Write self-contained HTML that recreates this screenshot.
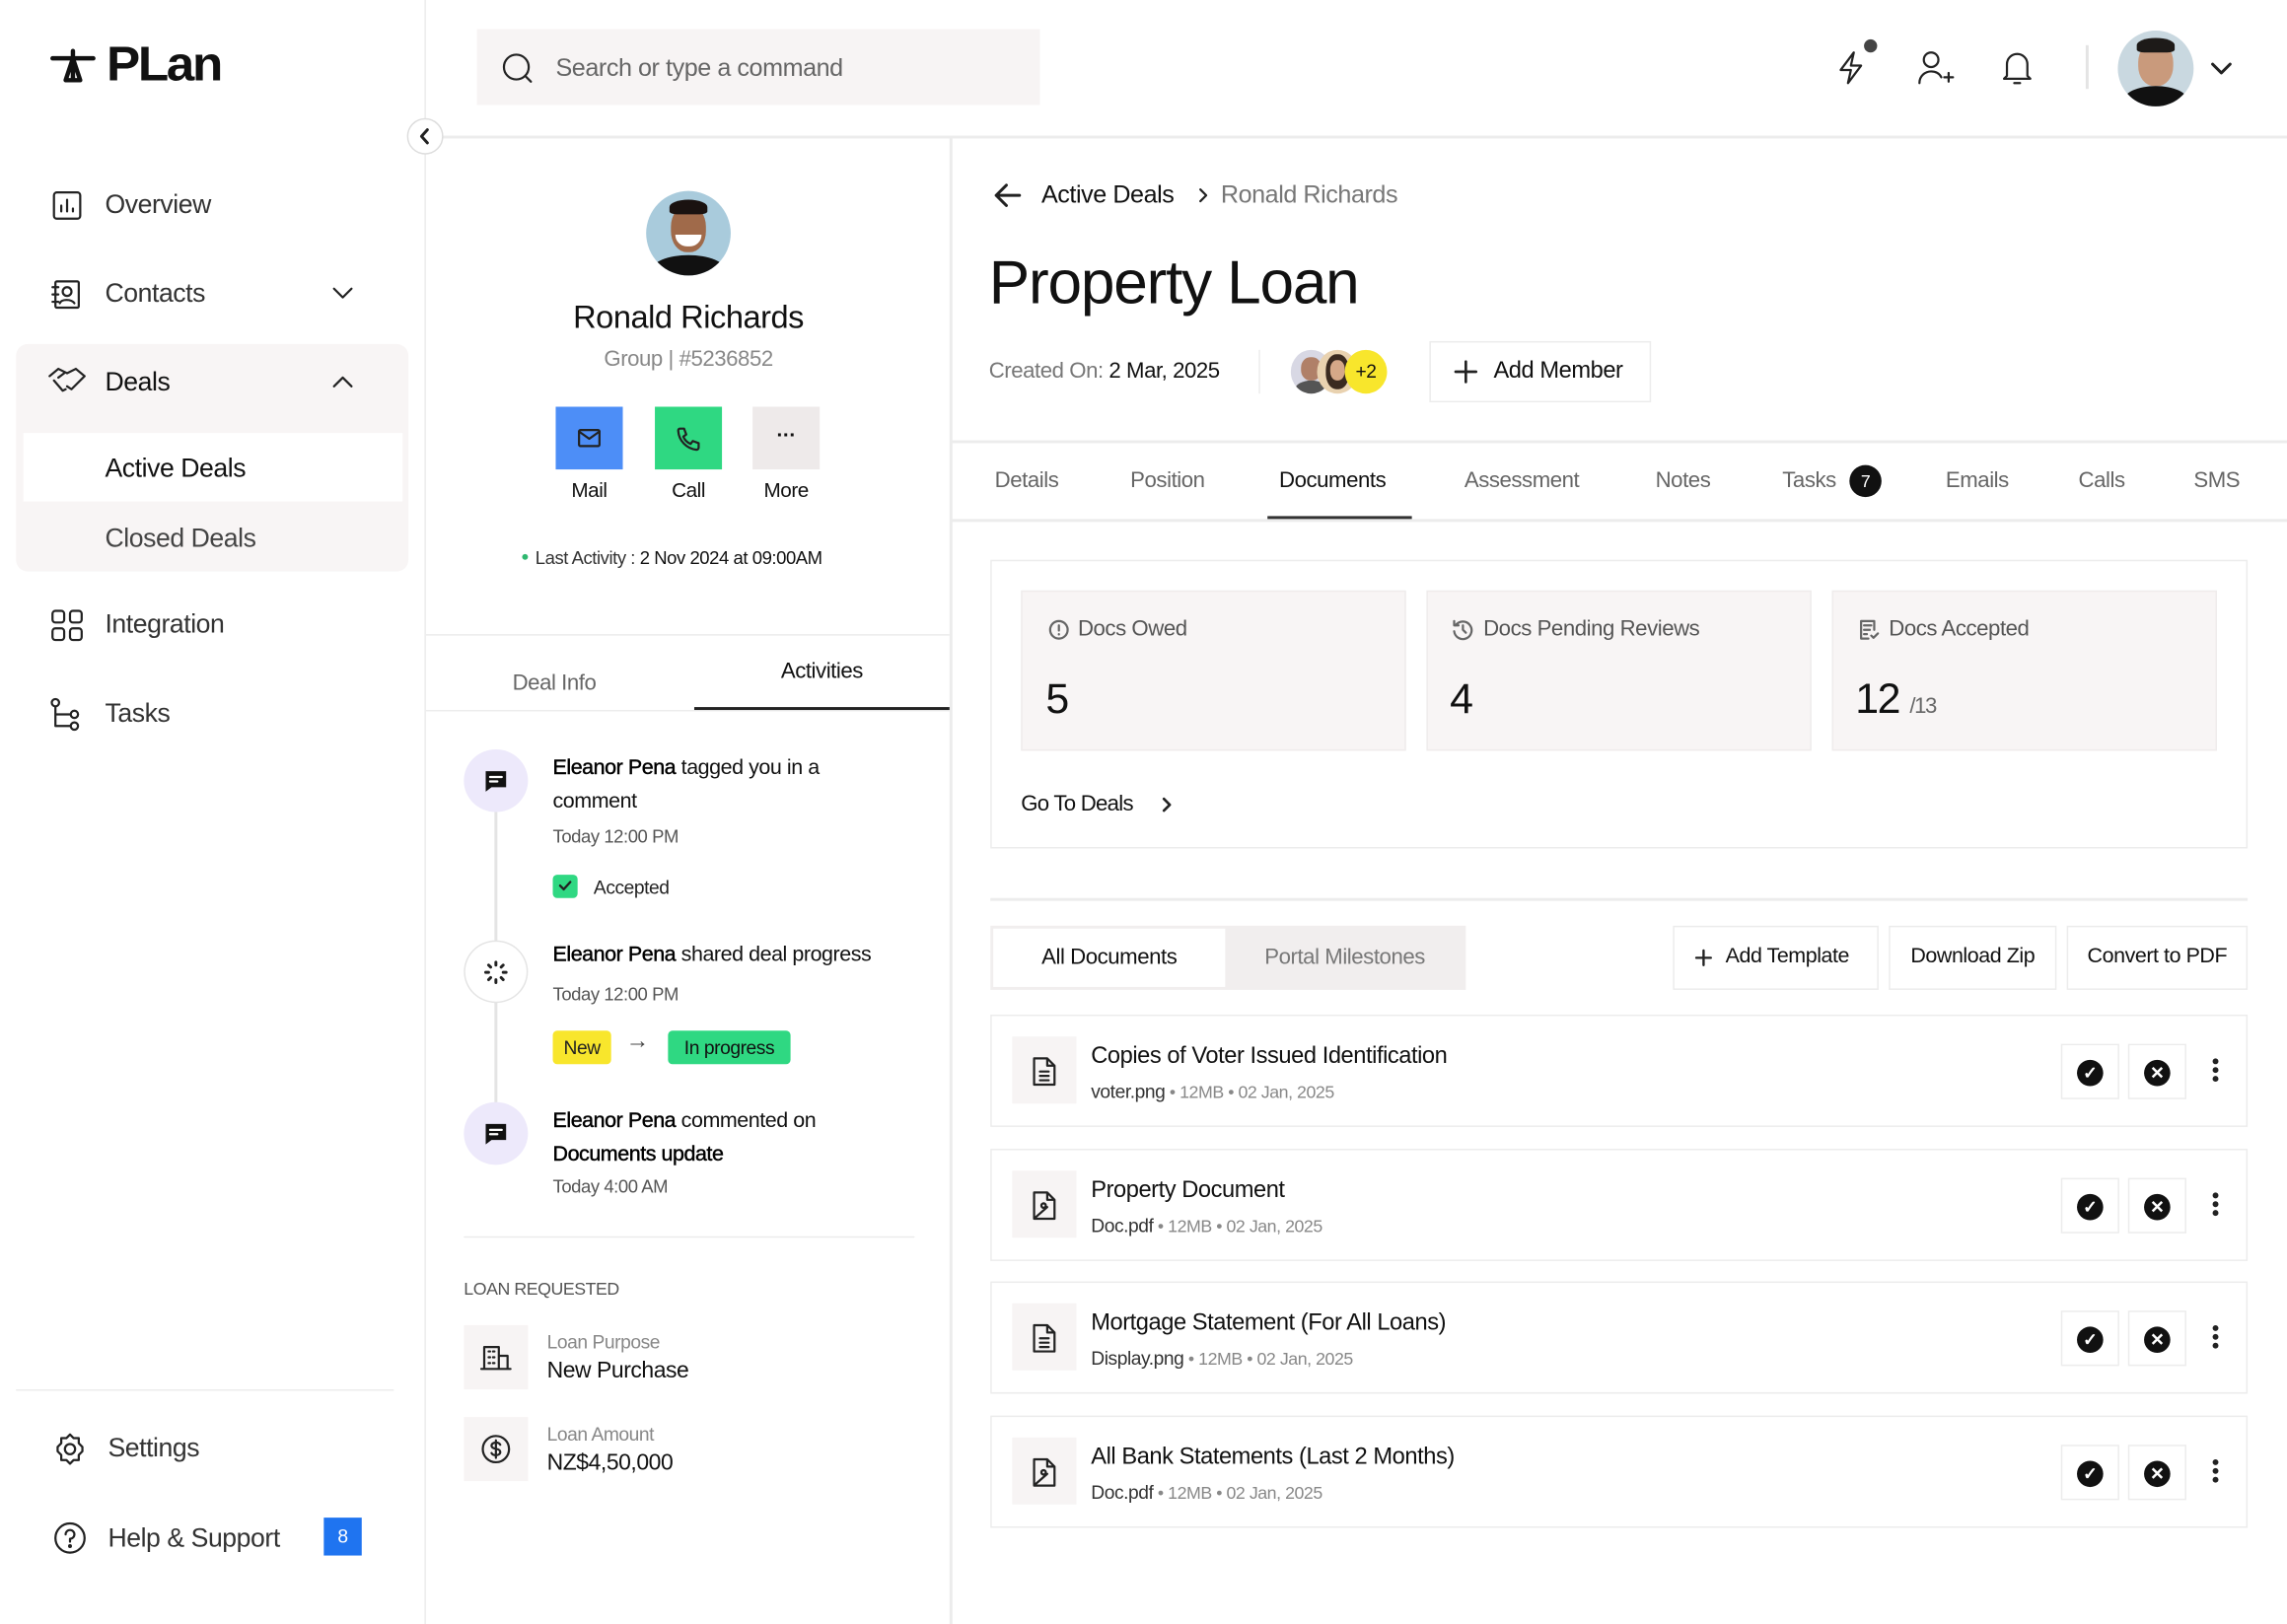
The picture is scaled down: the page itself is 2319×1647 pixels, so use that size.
<!DOCTYPE html>
<html><head><meta charset="utf-8">
<style>
*{box-sizing:border-box;margin:0;padding:0}
html,body{width:2319px;height:1647px;overflow:hidden;background:#fff}
#s{position:absolute;left:0;top:0;width:1568px;height:1114px;transform:scale(1.47895,1.4785);transform-origin:0 0;font-family:"Liberation Sans",sans-serif;color:#111;letter-spacing:-0.3px}
.a{position:absolute;white-space:nowrap}
.g{color:#666}
.b{border:1px solid #ececec}
svg{position:absolute;fill:none;stroke:#222;stroke-width:1.5;stroke-linecap:round;stroke-linejoin:round}
.nav{font-size:18px;color:#333}
.tab{font-size:15px;color:#666;top:321px}
.doc{position:absolute;left:679px;width:862px;height:77px;border:1.5px solid #ececec}
.doc .ib{position:absolute;left:14px;top:14px;width:44px;height:46px;background:#f7f4f4}
.doc .t{position:absolute;left:68px;top:19px;font-size:16px;color:#111}
.doc .m{position:absolute;left:68px;top:44px;font-size:12px;color:#888}
.doc .m span{color:#333;font-size:13px}
.doc .c1,.doc .c2{position:absolute;top:19px;width:40px;height:38px;border:1px solid #ececec}
.doc .c1{left:733px}.doc .c2{left:779px}
.dot{position:absolute;left:10px;top:10px;width:18px;height:18px;border-radius:50%;background:#111;color:#fff;font-size:12px;text-align:center;line-height:18px;font-weight:bold}
.vd{position:absolute;left:837px;top:29px;width:4px;height:4px;border-radius:50%;background:#222;box-shadow:0 6px 0 #222,0 12px 0 #222}
</style></head><body><div id="s">

<!-- Sidebar -->
<div class="a" style="left:291px;top:0;width:1px;height:1114px;background:#ececec"></div>
<svg style="left:34px;top:33px" width="32" height="24" viewBox="0 0 32 24"><path d="M2 7h28M16 2v20M16 7l-5 15h10z" stroke="#111" stroke-width="3"/></svg>
<div class="a" style="left:73px;top:25px;font-size:33px;font-weight:bold;letter-spacing:-1.5px;transform:scaleX(1.05);transform-origin:0 0">PLan</div>

<svg style="left:35px;top:130px" width="22" height="22" viewBox="0 0 22 22"><rect x="2" y="2" width="18" height="18" rx="2"/><path d="M7 15v-4M11 15V7M15 15v-2"/></svg>
<div class="a nav" style="left:72px;top:130px">Overview</div>
<svg style="left:34px;top:191px" width="22" height="22" viewBox="0 0 22 22"><rect x="4" y="2" width="16" height="18" rx="1"/><circle cx="12" cy="9" r="3"/><path d="M7 17c1-3 8-3 10 0M2 6h4M2 11h4M2 16h4"/></svg>
<div class="a nav" style="left:72px;top:191px">Contacts</div>
<svg style="left:227px;top:194px" width="16" height="14" viewBox="0 0 16 14"><path d="M2 4l6 6 6-6"/></svg>

<div class="a" style="left:11px;top:236px;width:269px;height:156px;background:#f8f5f5;border-radius:8px"></div>
<div class="a" style="left:16px;top:297px;width:260px;height:47px;background:#fff"></div>
<svg style="left:32px;top:250px" width="28" height="24" viewBox="0 0 28 24"><path d="M2 8l6-5 6 3 6-3 6 5-9 9-3-2M5 11l6 7 2-1M8 9l4-3"/></svg>
<div class="a nav" style="left:72px;top:252px;color:#111">Deals</div>
<svg style="left:227px;top:255px" width="16" height="14" viewBox="0 0 16 14"><path d="M2 10l6-6 6 6"/></svg>
<div class="a" style="left:72px;top:311px;font-size:18px;color:#111">Active Deals</div>
<div class="a nav" style="left:72px;top:359px;color:#444">Closed Deals</div>

<svg style="left:34px;top:417px" width="24" height="24" viewBox="0 0 24 24"><rect x="2" y="2" width="8" height="8" rx="2"/><rect x="14" y="2" width="8" height="8" rx="2"/><rect x="2" y="14" width="8" height="8" rx="2"/><rect x="14" y="14" width="8" height="8" rx="2"/></svg>
<div class="a nav" style="left:72px;top:418px">Integration</div>
<svg style="left:34px;top:478px" width="22" height="24" viewBox="0 0 22 24"><circle cx="4" cy="4" r="2.5"/><circle cx="17" cy="12" r="2.5"/><circle cx="17" cy="20" r="2.5"/><path d="M4 7v13h10M4 12h10"/></svg>
<div class="a nav" style="left:72px;top:479px">Tasks</div>

<div class="a" style="left:11px;top:953px;width:259px;height:1px;background:#ececec"></div>
<svg style="left:36px;top:982px" width="24" height="24" viewBox="0 0 24 24"><circle cx="12" cy="12" r="3.5"/><path d="M12 2l2.5 2.5h3.5v3.5L20.5 10.5v3L18 16v3.5h-3.5L12 22l-2.5-2.5H6V16L3.5 13.5v-3L6 8V4.5h3.5z"/></svg>
<div class="a nav" style="left:74px;top:983px">Settings</div>
<svg style="left:36px;top:1043px" width="24" height="24" viewBox="0 0 24 24"><circle cx="12" cy="12" r="10"/><path d="M9 9.5a3 3 0 1 1 3 3v2"/><circle cx="12" cy="17.5" r=".6" fill="#222"/></svg>
<div class="a nav" style="left:74px;top:1045px">Help &amp; Support</div>
<div class="a" style="left:222px;top:1041px;width:26px;height:26px;background:#1f74f0;color:#fff;font-size:13px;text-align:center;line-height:26px">8</div>

<!-- Topbar -->
<div class="a" style="left:292px;top:93px;width:1276px;height:1.5px;background:#ececec"></div>
<div class="a" style="left:327px;top:20px;width:386px;height:52px;background:#f7f4f4"></div>
<svg style="left:343px;top:35px" width="24" height="24" viewBox="0 0 24 24"><circle cx="11" cy="11" r="8.5"/><path d="M17 17l4 4"/></svg>
<div class="a" style="left:381px;top:37px;font-size:17px;color:#666">Search or type a command</div>
<div class="a" style="left:279px;top:81px;width:25px;height:25px;border-radius:50%;background:#fff;border:1px solid #ddd"></div>
<svg style="left:284px;top:86px" width="15" height="15" viewBox="0 0 15 15"><path d="M9 3L5 7.5 9 12" stroke-width="2"/></svg>

<svg style="left:1257px;top:32px" width="26" height="28" viewBox="0 0 26 28"><path d="M14 4L5 16h7l-2 9 9-12h-7z"/></svg>
<div class="a" style="left:1278px;top:27px;width:9px;height:9px;border-radius:50%;background:#444"></div>
<svg style="left:1313px;top:33px" width="28" height="28" viewBox="0 0 28 28"><circle cx="11" cy="8" r="5"/><path d="M3 24c0-5 4-8 8-8s6 2 7 4M20 20h6M23 17v6"/></svg>
<svg style="left:1370px;top:32px" width="26" height="28" viewBox="0 0 26 28"><path d="M6 20V12a7 7 0 0 1 14 0v8l2 2H4zM11 25h4"/></svg>
<div class="a" style="left:1430px;top:31px;width:1.5px;height:30px;background:#e4e4e4"></div>
<div class="a" style="left:1452px;top:21px;width:52px;height:52px;border-radius:50%;background:#c9d8e0;overflow:hidden">
 <div style="position:absolute;left:14px;top:8px;width:24px;height:30px;border-radius:45%;background:#c99a7c"></div>
 <div style="position:absolute;left:13px;top:5px;width:26px;height:10px;border-radius:50% 50% 20% 20%;background:#1d1a18"></div>
 <div style="position:absolute;left:4px;top:38px;width:44px;height:20px;border-radius:50% 50% 0 0;background:#111"></div>
</div>
<svg style="left:1515px;top:40px" width="16" height="14" viewBox="0 0 16 14"><path d="M2 4l6 6 6-6" stroke-width="2"/></svg>

<!-- Middle panel -->
<div class="a" style="left:651px;top:94px;width:1.5px;height:1020px;background:#ececec"></div>
<div class="a" style="left:443px;top:131px;width:58px;height:58px;border-radius:50%;background:#a9cbdc;overflow:hidden">
 <div style="position:absolute;left:17px;top:10px;width:24px;height:32px;border-radius:45%;background:#a06a4a"></div>
 <div style="position:absolute;left:16px;top:6px;width:26px;height:10px;border-radius:50% 50% 20% 20%;background:#1a1210"></div>
 <div style="position:absolute;left:20px;top:30px;width:18px;height:8px;border-radius:0 0 9px 9px;background:#fff"></div>
 <div style="position:absolute;left:4px;top:44px;width:50px;height:20px;border-radius:50% 50% 0 0;background:#111"></div>
</div>
<div class="a" style="left:292px;width:360px;top:205px;text-align:center;font-size:22px;color:#111">Ronald Richards</div>
<div class="a" style="left:292px;width:360px;top:238px;text-align:center;font-size:15px;color:#888">Group | #5236852</div>
<div class="a" style="left:381px;top:279px;width:46px;height:43px;background:#4d8ef7"></div>
<svg style="left:395px;top:293px" width="18" height="15" viewBox="0 0 18 15"><rect x="2" y="2" width="14" height="11" rx="1"/><path d="M2 3l7 5 7-5"/></svg>
<div class="a" style="left:449px;top:279px;width:46px;height:43px;background:#2fd882"></div>
<svg style="left:462px;top:291px" width="20" height="20" viewBox="0 0 20 20"><path d="M4 3h3l1.5 4-2 1.5a9 9 0 0 0 5 5l1.5-2 4 1.5v3a1.5 1.5 0 0 1-1.5 1.5A14 14 0 0 1 3 4.5 1.5 1.5 0 0 1 4 3z"/></svg>
<div class="a" style="left:516px;top:279px;width:46px;height:43px;background:#eeeaea;text-align:center;font-size:14px;line-height:38px;font-weight:bold">···</div>
<div class="a" style="left:381px;width:46px;top:328px;text-align:center;font-size:14px">Mail</div>
<div class="a" style="left:442px;width:60px;top:328px;text-align:center;font-size:14px">Call</div>
<div class="a" style="left:509px;width:60px;top:328px;text-align:center;font-size:14px">More</div>
<div class="a" style="left:358px;top:380px;width:4px;height:4px;border-radius:50%;background:#2fb870"></div>
<div class="a" style="left:367px;top:376px;font-size:12.5px;color:#333">Last Activity : <span style="color:#111">2 Nov 2024 at 09:00AM</span></div>

<div class="a" style="left:292px;top:435px;width:359px;height:1px;background:#ececec"></div>
<div class="a" style="left:292px;top:487px;width:359px;height:1px;background:#ececec"></div>
<div class="a" style="left:292px;width:176px;top:460px;text-align:center;font-size:15px;color:#666">Deal Info</div>
<div class="a" style="left:476px;width:175px;top:452px;text-align:center;font-size:15px;color:#111">Activities</div>
<div class="a" style="left:476px;top:485px;width:175px;height:2px;background:#222"></div>

<div class="a" style="left:339px;top:557px;width:1.5px;height:200px;background:#e4e4e4"></div>
<div class="a" style="left:318px;top:514px;width:44px;height:43px;border-radius:50%;background:#ede9fb"></div>
<svg style="left:331px;top:527px" width="18" height="18" viewBox="0 0 18 18"><path d="M2 2h14v11H6l-4 3z" fill="#111" stroke="none"/><path d="M5 6h8M5 9h5" stroke="#fff"/></svg>
<div class="a" style="left:379px;top:516px;font-size:14.5px;line-height:23px;white-space:normal;width:240px"><b style="font-weight:normal;color:#000;-webkit-text-stroke:.3px #000">Eleanor Pena</b> tagged you in a comment</div>
<div class="a" style="left:379px;top:567px;font-size:12.5px;color:#555">Today 12:00 PM</div>
<div class="a" style="left:379px;top:600px;width:17px;height:16px;border-radius:3px;background:#2fd882"></div>
<svg style="left:381px;top:601px" width="13" height="13" viewBox="0 0 13 13"><path d="M3 6.5l2.5 2.5 4.5-5" stroke-width="1.6"/></svg>
<div class="a" style="left:407px;top:601px;font-size:13px;color:#222">Accepted</div>

<div class="a" style="left:318px;top:645px;width:44px;height:43px;border-radius:50%;background:#fff;border:1px solid #e4e4e4"></div>
<svg style="left:330px;top:657px" width="20" height="20" viewBox="0 0 20 20"><path d="M10 3v2M10 15v2M3 10h2M15 10h2M5 5l1.4 1.4M13.6 13.6L15 15M5 15l1.4-1.4M13.6 6.4L15 5" stroke-width="2"/></svg>
<div class="a" style="left:379px;top:647px;font-size:14.5px"><b style="font-weight:normal;color:#000;-webkit-text-stroke:.3px #000">Eleanor Pena</b> shared deal progress</div>
<div class="a" style="left:379px;top:675px;font-size:12.5px;color:#555">Today 12:00 PM</div>
<div class="a" style="left:379px;top:707px;width:40px;height:23px;border-radius:3px;background:#f8e62c;font-size:13px;text-align:center;line-height:23px;color:#222">New</div>
<div class="a" style="left:429px;top:706px;font-size:16px;color:#444">→</div>
<div class="a" style="left:458px;top:707px;width:84px;height:23px;border-radius:3px;background:#2fd882;font-size:13px;text-align:center;line-height:23px;color:#111">In progress</div>

<div class="a" style="left:318px;top:756px;width:44px;height:43px;border-radius:50%;background:#ede9fb"></div>
<svg style="left:331px;top:769px" width="18" height="18" viewBox="0 0 18 18"><path d="M2 2h14v11H6l-4 3z" fill="#111" stroke="none"/><path d="M5 6h8M5 9h5" stroke="#fff"/></svg>
<div class="a" style="left:379px;top:758px;font-size:14.5px;line-height:23px"><b style="font-weight:normal;color:#000;-webkit-text-stroke:.3px #000">Eleanor Pena</b> commented on<br><b style="font-weight:normal;color:#000;-webkit-text-stroke:.3px #000">Documents update</b></div>
<div class="a" style="left:379px;top:807px;font-size:12.5px;color:#555">Today 4:00 AM</div>

<div class="a" style="left:318px;top:848px;width:309px;height:1px;background:#ececec"></div>
<div class="a" style="left:318px;top:877px;font-size:12px;color:#555">LOAN REQUESTED</div>
<div class="a" style="left:318px;top:909px;width:44px;height:44px;background:#f7f4f4"></div>
<svg style="left:329px;top:920px" width="22" height="22" viewBox="0 0 22 22"><path d="M3 19V4h10v15M13 10h6v9M1 19h20M6 7h1M9 7h1M6 11h1M9 11h1M6 15h1M9 15h1"/></svg>
<div class="a" style="left:375px;top:913px;font-size:13px;color:#888">Loan Purpose</div>
<div class="a" style="left:375px;top:932px;font-size:15.5px;color:#111">New Purchase</div>
<div class="a" style="left:318px;top:972px;width:44px;height:44px;background:#f7f4f4"></div>
<svg style="left:329px;top:983px" width="22" height="22" viewBox="0 0 22 22"><circle cx="11" cy="11" r="9"/><path d="M14 8c-.5-1-1.5-1.5-3-1.5s-3 .8-3 2.2 1.5 1.8 3 2.1 3 .8 3 2.2-1.5 2.2-3 2.2-2.5-.5-3-1.5M11 5v12"/></svg>
<div class="a" style="left:375px;top:976px;font-size:13px;color:#888">Loan Amount</div>
<div class="a" style="left:375px;top:995px;font-size:15.5px;color:#111">NZ$4,50,000</div>

<!-- Right panel -->
<svg style="left:680px;top:123px" width="22" height="22" viewBox="0 0 22 22"><path d="M19 11H3M10 4l-7 7 7 7" stroke-width="2"/></svg>
<div class="a" style="left:714px;top:124px;font-size:17px;color:#111">Active Deals</div>
<svg style="left:819px;top:127px" width="12" height="14" viewBox="0 0 12 14"><path d="M4 3l4 4-4 4"/></svg>
<div class="a" style="left:837px;top:124px;font-size:17px;color:#777">Ronald Richards</div>
<div class="a" style="left:678px;top:170px;font-size:42px;color:#111;letter-spacing:-0.8px">Property Loan</div>
<div class="a" style="left:678px;top:246px;font-size:15px;color:#777">Created On: <span style="color:#111">2 Mar, 2025</span></div>
<div class="a" style="left:863px;top:240px;width:1px;height:30px;background:#ececec"></div>
<div class="a" style="left:885px;top:240px;width:28px;height:30px;border-radius:50%;background:#d8d8e4;overflow:hidden"><div style="position:absolute;left:7px;top:5px;width:14px;height:16px;border-radius:45%;background:#b08068"></div><div style="position:absolute;left:3px;top:21px;width:22px;height:12px;border-radius:50%;background:#555"></div></div>
<div class="a" style="left:903px;top:240px;width:28px;height:30px;border-radius:50%;background:#e9d2b0;overflow:hidden"><div style="position:absolute;left:6px;top:3px;width:16px;height:24px;border-radius:45%;background:#3a2a20"></div><div style="position:absolute;left:9px;top:7px;width:10px;height:14px;border-radius:45%;background:#d5a888"></div></div>
<div class="a" style="left:922px;top:240px;width:29px;height:30px;border-radius:50%;background:#f8e62c;font-size:13px;text-align:center;line-height:30px;color:#111">+2</div>
<div class="a" style="left:980px;top:234px;width:152px;height:42px;border:1.5px solid #ececec"></div>
<svg style="left:996px;top:246px" width="18" height="18" viewBox="0 0 18 18"><path d="M9 2v14M2 9h14" stroke-width="1.8"/></svg>
<div class="a" style="left:1024px;top:246px;font-size:16px;color:#111">Add Member</div>

<div class="a" style="left:652px;top:302px;width:916px;height:1.5px;background:#ececec"></div>
<div class="a" style="left:652px;top:356px;width:916px;height:1.5px;background:#ececec"></div>
<div class="a tab" style="left:682px">Details</div>
<div class="a tab" style="left:775px">Position</div>
<div class="a tab" style="left:877px;color:#111">Documents</div>
<div class="a" style="left:869px;top:354px;width:99px;height:2px;background:#333"></div>
<div class="a tab" style="left:1004px">Assessment</div>
<div class="a tab" style="left:1135px">Notes</div>
<div class="a tab" style="left:1222px">Tasks</div>
<div class="a" style="left:1268px;top:319px;width:22px;height:22px;border-radius:50%;background:#111;color:#fff;font-size:12px;text-align:center;line-height:22px">7</div>
<div class="a tab" style="left:1334px">Emails</div>
<div class="a tab" style="left:1425px">Calls</div>
<div class="a tab" style="left:1504px">SMS</div>

<div class="a" style="left:679px;top:384px;width:862px;height:198px;border:1.5px solid #ececec"></div>
<div class="a" style="left:700px;top:405px;width:264px;height:110px;background:#f8f5f5;border:1px solid #efecec"></div>
<div class="a" style="left:978px;top:405px;width:264px;height:110px;background:#f8f5f5;border:1px solid #efecec"></div>
<div class="a" style="left:1256px;top:405px;width:264px;height:110px;background:#f8f5f5;border:1px solid #efecec"></div>
<svg style="left:718px;top:424px" width="16" height="16" viewBox="0 0 16 16"><circle cx="8" cy="8" r="6" stroke="#666"/><path d="M8 5v3.5M8 11v.2" stroke="#666"/></svg>
<div class="a" style="left:739px;top:423px;font-size:15px;color:#555">Docs Owed</div>
<svg style="left:995px;top:424px" width="16" height="16" viewBox="0 0 16 16"><path d="M3 5a6 6 0 1 1-1 4M8 5v3l2 2M2 2v3h3" stroke="#666"/></svg>
<div class="a" style="left:1017px;top:423px;font-size:15px;color:#555">Docs Pending Reviews</div>
<svg style="left:1273px;top:424px" width="16" height="16" viewBox="0 0 16 16"><path d="M12 8V2H3v12h5M5 5h5M5 8h4M5 11h2M10 12l1.5 1.5 3-3" stroke="#666"/></svg>
<div class="a" style="left:1295px;top:423px;font-size:15px;color:#555">Docs Accepted</div>
<div class="a" style="left:717px;top:464px;font-size:29px;color:#111">5</div>
<div class="a" style="left:994px;top:464px;font-size:29px;color:#111">4</div>
<div class="a" style="left:1272px;top:464px;font-size:29px;color:#111;letter-spacing:-1px">12 <span style="font-size:15px;color:#666">/13</span></div>
<div class="a" style="left:700px;top:543px;font-size:15px;color:#111;letter-spacing:-0.5px">Go To Deals</div>
<svg style="left:794px;top:545px" width="12" height="14" viewBox="0 0 12 14"><path d="M4 3l4 4-4 4" stroke-width="1.8"/></svg>

<div class="a" style="left:679px;top:616px;width:862px;height:1.5px;background:#ececec"></div>
<div class="a" style="left:679px;top:635px;width:326px;height:44px;background:#f1eeee"></div>
<div class="a" style="left:681px;top:637px;width:159px;height:40px;background:#fff"></div>
<div class="a" style="left:681px;width:159px;top:648px;text-align:center;font-size:15px;color:#111">All Documents</div>
<div class="a" style="left:842px;width:160px;top:648px;text-align:center;font-size:15px;color:#777">Portal Milestones</div>
<div class="a b" style="left:1147px;top:635px;width:141px;height:44px"></div>
<svg style="left:1161px;top:650px" width="14" height="14" viewBox="0 0 14 14"><path d="M7 2v10M2 7h10" stroke-width="1.6"/></svg>
<div class="a" style="left:1183px;top:648px;font-size:14.5px;color:#111">Add Template</div>
<div class="a b" style="left:1295px;top:635px;width:115px;height:44px"></div>
<div class="a" style="left:1295px;width:115px;top:648px;text-align:center;font-size:14.5px;color:#111">Download Zip</div>
<div class="a b" style="left:1417px;top:635px;width:124px;height:44px"></div>
<div class="a" style="left:1417px;width:124px;top:648px;text-align:center;font-size:14.5px;color:#111">Convert to PDF</div>

<div class="doc" style="top:696px"><div class="ib"></div><svg style="left:26px;top:27px" width="20" height="22" viewBox="0 0 20 22"><path d="M3 2h9l5 5v13H3zM12 2v5h5M7 11h6M7 14h6M7 17h6"/></svg><div class="t">Copies of Voter Issued Identification</div><div class="m"><span>voter.png</span> • 12MB • 02 Jan, 2025</div><div class="c1"><div class="dot">✓</div></div><div class="c2"><div class="dot">✕</div></div><div class="vd"></div></div>
<div class="doc" style="top:788px"><div class="ib"></div><svg style="left:26px;top:27px" width="20" height="22" viewBox="0 0 20 22"><path d="M3 2h9l5 5v13H3zM12 2v5h5M4 19l8-7M8 11a1.5 1.5 0 1 0 0-.1"/></svg><div class="t">Property Document</div><div class="m"><span>Doc.pdf</span> • 12MB • 02 Jan, 2025</div><div class="c1"><div class="dot">✓</div></div><div class="c2"><div class="dot">✕</div></div><div class="vd"></div></div>
<div class="doc" style="top:879px"><div class="ib"></div><svg style="left:26px;top:27px" width="20" height="22" viewBox="0 0 20 22"><path d="M3 2h9l5 5v13H3zM12 2v5h5M7 11h6M7 14h6M7 17h6"/></svg><div class="t">Mortgage Statement (For All Loans)</div><div class="m"><span>Display.png</span> • 12MB • 02 Jan, 2025</div><div class="c1"><div class="dot">✓</div></div><div class="c2"><div class="dot">✕</div></div><div class="vd"></div></div>
<div class="doc" style="top:971px"><div class="ib"></div><svg style="left:26px;top:27px" width="20" height="22" viewBox="0 0 20 22"><path d="M3 2h9l5 5v13H3zM12 2v5h5M4 19l8-7M8 11a1.5 1.5 0 1 0 0-.1"/></svg><div class="t">All Bank Statements (Last 2 Months)</div><div class="m"><span>Doc.pdf</span> • 12MB • 02 Jan, 2025</div><div class="c1"><div class="dot">✓</div></div><div class="c2"><div class="dot">✕</div></div><div class="vd"></div></div>

</div></body></html>
